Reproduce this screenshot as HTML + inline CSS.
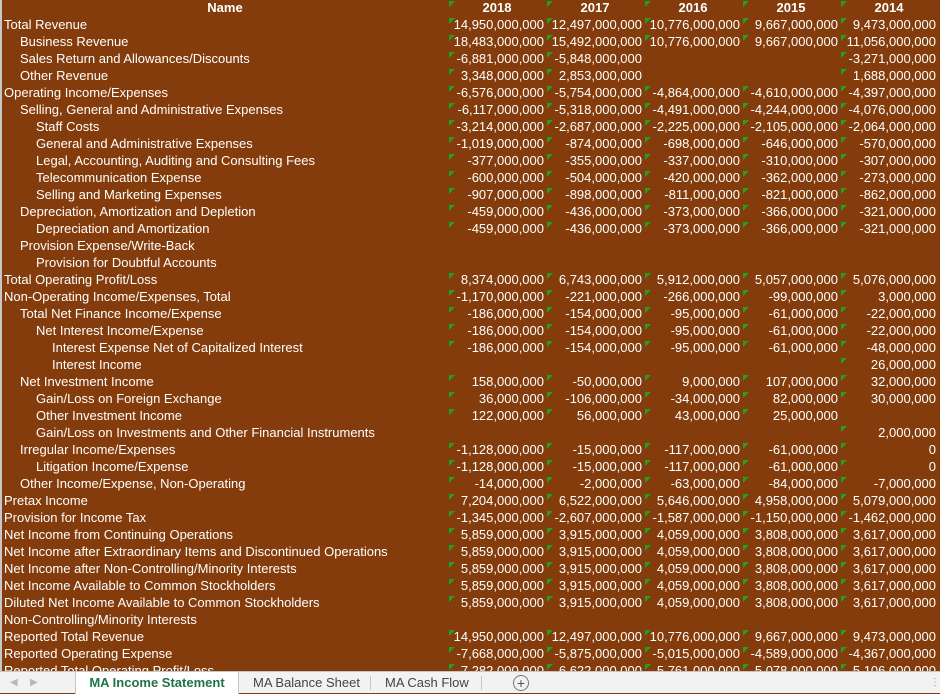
<!DOCTYPE html>
<html><head><meta charset="utf-8"><style>
*{margin:0;padding:0;box-sizing:border-box}
body{width:940px;height:693px;overflow:hidden;background:#843c0c;font-family:"Liberation Sans",Arial,sans-serif;font-size:13px;color:#fff;position:relative}
#sheet{position:absolute;left:0;top:0;width:940px;border-left:2px solid #c8c8c8}
.r{display:flex;height:17px;line-height:16px;white-space:nowrap}
.r>span{width:98px;text-align:right;padding-right:2px;position:relative;overflow:visible}
.r>span:first-child{width:446px;text-align:left;padding-left:2px}
.l1>span:first-child{padding-left:18px}
.l2>span:first-child{padding-left:34px}
.l3>span:first-child{padding-left:50px}
.h{font-weight:bold}
.h>span{text-align:center!important;padding:0!important}
.r>span.v::before,.h>span:not(:first-child)::before{content:"";position:absolute;left:1px;top:1px;border-top:6px solid #22a022;border-right:6px solid transparent}
#tabs{position:absolute;left:0;top:671px;width:940px;height:22px;background:#f2f2f2;border-top:1px solid #c6c6c6;color:#444;font-size:13px}
#tabs div{position:absolute;top:0;height:22px;line-height:22px}
.act{left:75px;width:164px;background:#fff;color:#217346;font-weight:bold;text-align:center;border-left:1px solid #c6c6c6;border-right:1px solid #c6c6c6}
.sep{width:1px;background:#c6c6c6;top:4px!important;height:14px!important}
</style></head><body>
<div id="sheet">
<div class="r h"><span style="text-align:center">Name</span><span>2018</span><span>2017</span><span>2016</span><span>2015</span><span>2014</span></div>
<div class="r"><span>Total Revenue</span><span class="v">14,950,000,000</span><span class="v">12,497,000,000</span><span class="v">10,776,000,000</span><span class="v">9,667,000,000</span><span class="v">9,473,000,000</span></div>
<div class="r l1"><span>Business Revenue</span><span class="v">18,483,000,000</span><span class="v">15,492,000,000</span><span class="v">10,776,000,000</span><span class="v">9,667,000,000</span><span class="v">11,056,000,000</span></div>
<div class="r l1"><span>Sales Return and Allowances/Discounts</span><span class="v">-6,881,000,000</span><span class="v">-5,848,000,000</span><span></span><span></span><span class="v">-3,271,000,000</span></div>
<div class="r l1"><span>Other Revenue</span><span class="v">3,348,000,000</span><span class="v">2,853,000,000</span><span></span><span></span><span class="v">1,688,000,000</span></div>
<div class="r"><span>Operating Income/Expenses</span><span class="v">-6,576,000,000</span><span class="v">-5,754,000,000</span><span class="v">-4,864,000,000</span><span class="v">-4,610,000,000</span><span class="v">-4,397,000,000</span></div>
<div class="r l1"><span>Selling, General and Administrative Expenses</span><span class="v">-6,117,000,000</span><span class="v">-5,318,000,000</span><span class="v">-4,491,000,000</span><span class="v">-4,244,000,000</span><span class="v">-4,076,000,000</span></div>
<div class="r l2"><span>Staff Costs</span><span class="v">-3,214,000,000</span><span class="v">-2,687,000,000</span><span class="v">-2,225,000,000</span><span class="v">-2,105,000,000</span><span class="v">-2,064,000,000</span></div>
<div class="r l2"><span>General and Administrative Expenses</span><span class="v">-1,019,000,000</span><span class="v">-874,000,000</span><span class="v">-698,000,000</span><span class="v">-646,000,000</span><span class="v">-570,000,000</span></div>
<div class="r l2"><span>Legal, Accounting, Auditing and Consulting Fees</span><span class="v">-377,000,000</span><span class="v">-355,000,000</span><span class="v">-337,000,000</span><span class="v">-310,000,000</span><span class="v">-307,000,000</span></div>
<div class="r l2"><span>Telecommunication Expense</span><span class="v">-600,000,000</span><span class="v">-504,000,000</span><span class="v">-420,000,000</span><span class="v">-362,000,000</span><span class="v">-273,000,000</span></div>
<div class="r l2"><span>Selling and Marketing Expenses</span><span class="v">-907,000,000</span><span class="v">-898,000,000</span><span class="v">-811,000,000</span><span class="v">-821,000,000</span><span class="v">-862,000,000</span></div>
<div class="r l1"><span>Depreciation, Amortization and Depletion</span><span class="v">-459,000,000</span><span class="v">-436,000,000</span><span class="v">-373,000,000</span><span class="v">-366,000,000</span><span class="v">-321,000,000</span></div>
<div class="r l2"><span>Depreciation and Amortization</span><span class="v">-459,000,000</span><span class="v">-436,000,000</span><span class="v">-373,000,000</span><span class="v">-366,000,000</span><span class="v">-321,000,000</span></div>
<div class="r l1"><span>Provision Expense/Write-Back</span><span></span><span></span><span></span><span></span><span></span></div>
<div class="r l2"><span>Provision for Doubtful Accounts</span><span></span><span></span><span></span><span></span><span></span></div>
<div class="r"><span>Total Operating Profit/Loss</span><span class="v">8,374,000,000</span><span class="v">6,743,000,000</span><span class="v">5,912,000,000</span><span class="v">5,057,000,000</span><span class="v">5,076,000,000</span></div>
<div class="r"><span>Non-Operating Income/Expenses, Total</span><span class="v">-1,170,000,000</span><span class="v">-221,000,000</span><span class="v">-266,000,000</span><span class="v">-99,000,000</span><span class="v">3,000,000</span></div>
<div class="r l1"><span>Total Net Finance Income/Expense</span><span class="v">-186,000,000</span><span class="v">-154,000,000</span><span class="v">-95,000,000</span><span class="v">-61,000,000</span><span class="v">-22,000,000</span></div>
<div class="r l2"><span>Net Interest Income/Expense</span><span class="v">-186,000,000</span><span class="v">-154,000,000</span><span class="v">-95,000,000</span><span class="v">-61,000,000</span><span class="v">-22,000,000</span></div>
<div class="r l3"><span>Interest Expense Net of Capitalized Interest</span><span class="v">-186,000,000</span><span class="v">-154,000,000</span><span class="v">-95,000,000</span><span class="v">-61,000,000</span><span class="v">-48,000,000</span></div>
<div class="r l3"><span>Interest Income</span><span></span><span></span><span></span><span></span><span class="v">26,000,000</span></div>
<div class="r l1"><span>Net Investment Income</span><span class="v">158,000,000</span><span class="v">-50,000,000</span><span class="v">9,000,000</span><span class="v">107,000,000</span><span class="v">32,000,000</span></div>
<div class="r l2"><span>Gain/Loss on Foreign Exchange</span><span class="v">36,000,000</span><span class="v">-106,000,000</span><span class="v">-34,000,000</span><span class="v">82,000,000</span><span class="v">30,000,000</span></div>
<div class="r l2"><span>Other Investment Income</span><span class="v">122,000,000</span><span class="v">56,000,000</span><span class="v">43,000,000</span><span class="v">25,000,000</span><span></span></div>
<div class="r l2"><span>Gain/Loss on Investments and Other Financial Instruments</span><span></span><span></span><span></span><span></span><span class="v">2,000,000</span></div>
<div class="r l1"><span>Irregular Income/Expenses</span><span class="v">-1,128,000,000</span><span class="v">-15,000,000</span><span class="v">-117,000,000</span><span class="v">-61,000,000</span><span class="v">0</span></div>
<div class="r l2"><span>Litigation Income/Expense</span><span class="v">-1,128,000,000</span><span class="v">-15,000,000</span><span class="v">-117,000,000</span><span class="v">-61,000,000</span><span class="v">0</span></div>
<div class="r l1"><span>Other Income/Expense, Non-Operating</span><span class="v">-14,000,000</span><span class="v">-2,000,000</span><span class="v">-63,000,000</span><span class="v">-84,000,000</span><span class="v">-7,000,000</span></div>
<div class="r"><span>Pretax Income</span><span class="v">7,204,000,000</span><span class="v">6,522,000,000</span><span class="v">5,646,000,000</span><span class="v">4,958,000,000</span><span class="v">5,079,000,000</span></div>
<div class="r"><span>Provision for Income Tax</span><span class="v">-1,345,000,000</span><span class="v">-2,607,000,000</span><span class="v">-1,587,000,000</span><span class="v">-1,150,000,000</span><span class="v">-1,462,000,000</span></div>
<div class="r"><span>Net Income from Continuing Operations</span><span class="v">5,859,000,000</span><span class="v">3,915,000,000</span><span class="v">4,059,000,000</span><span class="v">3,808,000,000</span><span class="v">3,617,000,000</span></div>
<div class="r"><span>Net Income after Extraordinary Items and Discontinued Operations</span><span class="v">5,859,000,000</span><span class="v">3,915,000,000</span><span class="v">4,059,000,000</span><span class="v">3,808,000,000</span><span class="v">3,617,000,000</span></div>
<div class="r"><span>Net Income after Non-Controlling/Minority Interests</span><span class="v">5,859,000,000</span><span class="v">3,915,000,000</span><span class="v">4,059,000,000</span><span class="v">3,808,000,000</span><span class="v">3,617,000,000</span></div>
<div class="r"><span>Net Income Available to Common Stockholders</span><span class="v">5,859,000,000</span><span class="v">3,915,000,000</span><span class="v">4,059,000,000</span><span class="v">3,808,000,000</span><span class="v">3,617,000,000</span></div>
<div class="r"><span>Diluted Net Income Available to Common Stockholders</span><span class="v">5,859,000,000</span><span class="v">3,915,000,000</span><span class="v">4,059,000,000</span><span class="v">3,808,000,000</span><span class="v">3,617,000,000</span></div>
<div class="r"><span>Non-Controlling/Minority Interests</span><span></span><span></span><span></span><span></span><span></span></div>
<div class="r"><span>Reported Total Revenue</span><span class="v">14,950,000,000</span><span class="v">12,497,000,000</span><span class="v">10,776,000,000</span><span class="v">9,667,000,000</span><span class="v">9,473,000,000</span></div>
<div class="r"><span>Reported Operating Expense</span><span class="v">-7,668,000,000</span><span class="v">-5,875,000,000</span><span class="v">-5,015,000,000</span><span class="v">-4,589,000,000</span><span class="v">-4,367,000,000</span></div>
<div class="r"><span>Reported Total Operating Profit/Loss</span><span class="v">7,282,000,000</span><span class="v">6,622,000,000</span><span class="v">5,761,000,000</span><span class="v">5,078,000,000</span><span class="v">5,106,000,000</span></div>
</div>
<div id="tabs">
<div style="left:10px;color:#b8b8b8;font-size:10px">&#9664;</div>
<div style="left:30px;color:#b8b8b8;font-size:10px">&#9654;</div>
<div class="act">MA Income Statement</div>
<div style="left:253px">MA Balance Sheet</div>
<div class="sep" style="left:370px"></div>
<div style="left:385px">MA Cash Flow</div>
<div class="sep" style="left:481px"></div>
<div style="left:513px;top:3px!important;width:16px;height:16px!important;line-height:14px;border:1px solid #777;border-radius:50%;text-align:center;font-size:14px;color:#555">+</div>
<div style="left:930px;color:#999;font-size:10px">&#8942;</div>
</div>
</body></html>
